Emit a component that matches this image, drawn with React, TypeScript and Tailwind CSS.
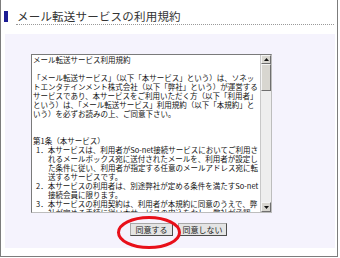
import React from "react";

const jp = { fontFamily: '"Noto Sans CJK JP", "Noto Sans", sans-serif' };

const intro = [
  "「メール転送サービス」（以下「本サービス」という）は、ソネッ",
  "トエンタテインメント株式会社（以下「弊社」という）が運営する",
  "サービスであり、本サービスをご利用いただく方（以下「利用者」",
  "という）は、「メール転送サービス」利用規約（以下「本規約」と",
  "いう）を必ずお読みの上、ご同意下さい。",
];

const items = [
  {
    no: "1．",
    lines: [
      "本サービスは、利用者がSo-net接続サービスにおいてご利用さ",
      "れるメールボックス宛に送付されたメールを、利用者が設定し",
      "た条件に従い、利用者が指定する任意のメールアドレス宛に転",
      "送するサービスです。",
    ],
  },
  {
    no: "2．",
    lines: ["本サービスの利用者は、別途弊社が定める条件を満たすSo-net", "接続会員に限ります。"],
  },
  {
    no: "3．",
    lines: [
      "本サービスの利用契約は、利用者が本規約に同意のうえで、弊",
      "社が定める手続に従い本サービスの申込をなし、弊社が承認",
    ],
  },
];

function Arrow({ up }: { up?: boolean }) {
  return (
    <svg width="5" height="3" viewBox="0 0 5 3">
      <path d={up ? "M0,3 L2.5,0 L5,3 Z" : "M0,0 L2.5,3 L5,0 Z"} fill="#111" />
    </svg>
  );
}

function ScrollBar() {
  return (
    <div className="w-[11px] flex flex-col border-l border-[#c8c8c8] bg-[#eeeeee]">
      <div className="h-[9px] flex items-center justify-center bg-[#d8d6d0] border border-[#f4f4f4] border-b-[#6f6f6f] border-r-[#6f6f6f]">
        <Arrow up />
      </div>
      <div className="h-[27px] bg-[#d8d6d0] border border-[#f4f4f4] border-b-[#6f6f6f] border-r-[#6f6f6f]" />
      <div className="flex-1" />
      <div className="h-[10px] flex items-center justify-center bg-[#d8d6d0] border border-[#f4f4f4] border-b-[#6f6f6f] border-r-[#6f6f6f]">
        <Arrow />
      </div>
    </div>
  );
}

export default function App() {
  return (
    <div className="w-[340px] h-[258px] bg-white relative" style={jp}>
      <div className="w-[338px] h-[257px] border-l border-r border-b border-[#7c7c7c]">
        {/* Title */}
        <div className="flex items-center pl-[3px] pt-[9px]">
          <div className="w-[4px] h-[11px] bg-[#1c1c94]" />
          <span className="ml-[9px] text-[11.5px] leading-[14px] text-[#333] tracking-[0.2px]">
            メール転送サービスの利用規約
          </span>
        </div>
        <div className="ml-[15px] w-[318px] mt-[1px] border-b border-dotted border-[#9a9a9a]" />

        {/* Panel */}
        <div className="ml-[4px] mt-[9px] w-[330px] h-[214px] bg-[#f5f3fd] pt-[20px] pl-[26px]">
          <div className="w-[241px] h-[159px] flex bg-white border border-[#7a7a7a] border-b-[#bdbdbd] border-r-[#bdbdbd]">
            <div className="flex-1 overflow-hidden pl-[1px] text-[7.5px] leading-[9px] text-[#111] whitespace-pre">
              <div>メール転送サービス利用規約</div>
              <div>&nbsp;</div>
              {intro.map((l) => (
                <div key={l}>{l}</div>
              ))}
              <div>&nbsp;</div>
              <div>&nbsp;</div>
              <div>第1条（本サービス）</div>
              {items.map((it) => (
                <div key={it.no}>
                  {it.lines.map((l, i) => (
                    <div key={i} className={i === 0 ? "pl-[3px]" : "pl-[15px]"}>
                      {i === 0 ? it.no : ""}
                      {l}
                    </div>
                  ))}
                </div>
              ))}
            </div>
            <ScrollBar />
          </div>

          {/* Buttons */}
          <div className="flex gap-[5px] mt-[10px] pl-[99px]">
            <button className="w-[43px] h-[13px] flex items-center justify-center bg-[#e4e4e4] border border-[#a8a8a8] border-b-[#4c4c4c] border-r-[#4c4c4c] text-[8px] leading-none text-[#222]">
              同意する
            </button>
            <button className="w-[49px] h-[13px] flex items-center justify-center bg-[#e4e4e4] border border-[#a8a8a8] border-b-[#4c4c4c] border-r-[#4c4c4c] text-[8px] leading-none text-[#222]">
              同意しない
            </button>
          </div>
        </div>
      </div>

      {/* Red annotation circle */}
      <svg className="absolute left-[116px] top-[215px] pointer-events-none" width="66" height="35" viewBox="0 0 66 35">
        <ellipse cx="33" cy="17.5" rx="30.5" ry="15" fill="none" stroke="#e8101a" strokeWidth="3" />
      </svg>
    </div>
  );
}
